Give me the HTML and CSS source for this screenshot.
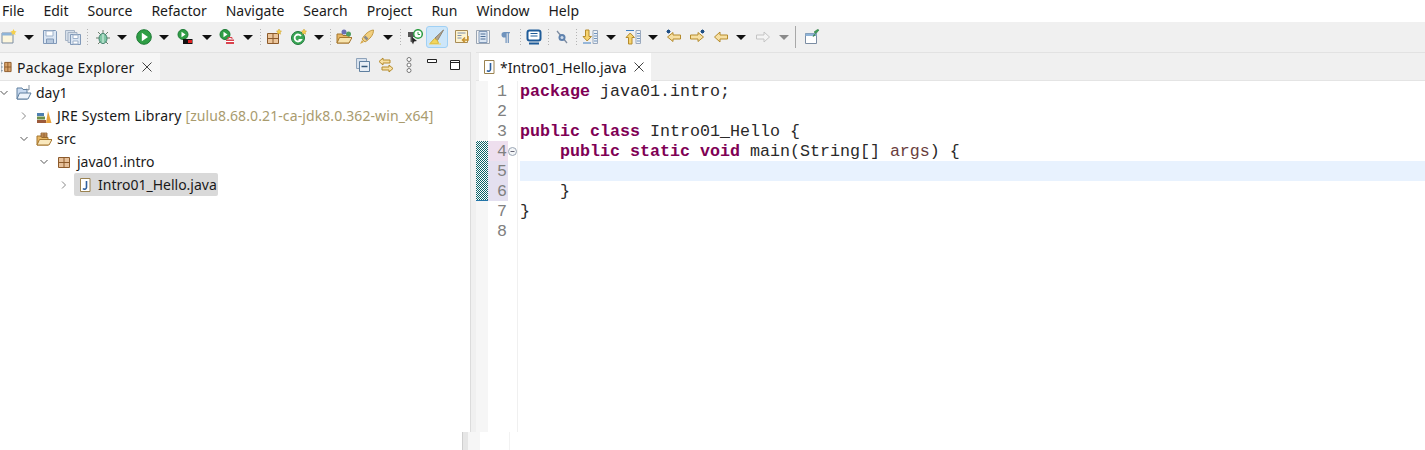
FILE: index.html
```html
<!DOCTYPE html>
<html lang="en">
<head>
<meta charset="utf-8">
<title>Eclipse</title>
<link rel="stylesheet" href="styles.css">
</head>
<body>
<nav class="menu">
<span>File</span><span>Edit</span><span>Source</span><span>Refactor</span><span>Navigate</span><span>Search</span><span>Project</span><span>Run</span><span>Window</span><span>Help</span>
</nav>
<div class="toolbar">
<svg class="ic g1" viewBox="0 0 16 16"><path d="M1 4h11v10H1z" fill="#fdf6dc" stroke="#7b8da3"/><path d="M1 4h11v2.500H1z" fill="#8fb4d8"/><path d="M12.500 0l1 2 2 .5-1.500 1.500.5 2-2-1-2 1 .5-2L9.500 2.500l2-.5z" fill="#f5d04c"/></svg>
<i class="dr g8"></i>
<svg class="ic g9" viewBox="0 0 16 16"><path d="M1.500 1.500h12l1 1v12h-13z" fill="#dbe6f3" stroke="#8199b8"/><path d="M4 2h7v5H4z" fill="#fff" stroke="#9fb2ca"/><path d="M4.500 10h7v4.500h-7z" fill="#b7c8dd" stroke="#8199b8"/></svg>
<svg class="ic g7" viewBox="0 0 16 16"><path d="M.5 1.500h9v10h-9z" fill="#d6dfea" stroke="#a5b3c5"/><path d="M3 3.500h9v10H3z" fill="#d6dfea" stroke="#a5b3c5"/><path d="M5.500 5.500h10v10h-10z" fill="#dbe6f3" stroke="#8199b8"/><path d="M8 6h5v3.500H8zM8 12h5v3H8z" fill="#fff" stroke="#9fb2ca"/></svg>
<i class="sp g6"></i>
<svg class="ic g7" viewBox="0 0 16 16"><path d="M8 1v3M3 3l3 3M13 3l-3 3M1 9h3M12 9h3M3 15l3-3M13 15l-3-3" stroke="#6b7f6b" fill="none"/><ellipse cx="8" cy="9.500" rx="4" ry="5" fill="#7fc6a4" stroke="#3f7f6b"/><path d="M8 5v9" stroke="#dff2e8"/></svg>
<i class="dr g7"></i>
<svg class="ic g10" viewBox="0 0 16 16"><circle cx="8" cy="8" r="7.300" fill="#2f9e45" stroke="#1d7a35"/><path d="M5.800 3.800l6.200 4.200-6.200 4.200z" fill="#fff"/></svg>
<i class="dr g8"></i>
<svg class="ic g9" viewBox="0 0 16 16"><circle cx="6" cy="5.500" r="5" fill="#2f9e45" stroke="#1d7a35"/><path d="M4.500 2.800l4 2.700-4 2.700z" fill="#fff"/><path d="M6 10h9.500v5H6z" fill="#111"/><path d="M11 11h4v3h-4z" fill="#d22"/></svg>
<i class="dr g10"></i>
<svg class="ic g8" viewBox="0 0 16 16"><circle cx="6" cy="5.500" r="5" fill="#2f9e45" stroke="#1d7a35"/><path d="M4.500 2.800l4 2.700-4 2.700z" fill="#fff"/><path d="M7 10.500h8v4.500H7z" fill="#d9434e"/><path d="M9 10V8.500h4V10" fill="none" stroke="#d9434e"/><path d="M7 12.500h8" stroke="#fff"/></svg>
<i class="dr g9"></i>
<i class="sp g8"></i>
<svg class="ic g5" viewBox="0 0 16 16"><path d="M1.500 4.500h11v10h-11z" fill="#ebc59b" stroke="#8c5a2b"/><path d="M7 4.500v10M1.500 9.500h11" stroke="#8c5a2b"/><path d="M13 0l.8 1.700 1.700.5-1.300 1.200.3 1.800-1.500-.9-1.500.9.300-1.800-1.300-1.200 1.700-.5z" fill="#f5d04c" stroke="#c69a26" stroke-width=".5"/></svg>
<svg class="ic g9" viewBox="0 0 16 16"><circle cx="7" cy="9" r="6.500" fill="#3aa655" stroke="#1f7a3a"/><path d="M10 7a3.500 3.500 0 1 0 0 4H7.500" fill="none" stroke="#fff" stroke-width="1.800"/><path d="M13 0l.8 1.700 1.700.5-1.300 1.200.3 1.800-1.500-.9-1.500.9.300-1.800-1.300-1.200 1.700-.5z" fill="#f5d04c" stroke="#c69a26" stroke-width=".5"/></svg>
<i class="dr g8"></i>
<i class="sp g7"></i>
<svg class="ic g5" viewBox="0 0 16 16"><path d="M1 5h5l1 1.500h6V14H1z" fill="#e8b765" stroke="#a5762e"/><path d="M1 14l2.500-5.500H16L13 14z" fill="#f7e3ad" stroke="#a5762e"/><circle cx="8" cy="3" r="2.500" fill="#6a6fb5"/><circle cx="12.500" cy="5" r="2.500" fill="#4f9e63"/></svg>
<svg class="ic g7" viewBox="0 0 16 16"><path d="M14.500 1C10 1.500 6 5 3 10l3 3c5-3 8.500-7 8.500-12z" fill="#f2cf7e" stroke="#c39a44"/><path d="M5.500 7.500l3 3" stroke="#8a8a8a" stroke-width="2.500"/><path d="M3 11l-2 4 4-2z" fill="#d8a94a"/></svg>
<i class="dr g9"></i>
<i class="sp g8"></i>
<svg class="ic g6" viewBox="0 0 16 16"><path d="M1 3h8v5H6v7l-1.500-2-1-.2V8H1z" fill="#555"/><path d="M5 8l5 4-3 .5-1 3z" fill="#222"/><circle cx="11" cy="5" r="4.300" fill="#fff" stroke="#2f9e45" stroke-width="1.500"/><path d="M11 3v2.500h2" stroke="#2f9e45" fill="none"/></svg>
<span class="active g2"><svg class="ic" viewBox="0 0 16 16"><path d="M14.500 1L6 9l2.500 2.500z" fill="#b4a58a" stroke="#8e8270"/><path d="M5.500 9.500L1 14.500h8.500l-1-3z" fill="#f2d65d" stroke="#d4b23a"/><path d="M0 15h12" stroke="#f2d65d"/></svg></span>
<svg class="ic g9" viewBox="0 0 16 16"><path d="M1.500 1.500h12v12h-12z" fill="#fdf3cf" stroke="#a88c55"/><path d="M3.500 4h8M3.500 6.500h4M3.500 9h4" stroke="#7e90ad"/><path d="M14 7v4H9M11 8.500L8.500 11l2.500 2.500" fill="none" stroke="#c6912e" stroke-width="1.500"/></svg>
<svg class="ic g5" viewBox="0 0 16 16"><path d="M1.500 1.500h13v13h-13z" fill="#f4f4f4" stroke="#9aa5b3"/><path d="M4 2.500h8v11H4z" fill="#dbe6f3" stroke="#8199b8"/><path d="M5.500 5h5M5.500 7.500h5M5.500 10h5" stroke="#4f6f96"/></svg>
<svg class="ic g7" viewBox="0 0 16 16"><path d="M11.500 3H7.800a2.800 2.800 0 0 0 0 5.600H9V14h1.200V4.200h1V14h1.200V4.200h1V3z" fill="#6f93bd" transform="translate(-1.500 0)"/></svg>
<i class="sp g6"></i>
<svg class="ic g5" viewBox="0 0 16 16"><rect x="1.500" y="1.500" width="13" height="10" rx="2" fill="#fff" stroke="#1f5c99" stroke-width="2"/><path d="M4.500 4.500h7M4.500 7h7" stroke="#1f5c99"/><path d="M3 14.500h10" stroke="#1f5c99" stroke-width="2"/></svg>
<i class="sp g6"></i>
<svg class="ic g5" viewBox="0 0 16 16"><path d="M3 2l10 12" stroke="#7e8ca0" stroke-width="1.300"/><circle cx="8" cy="8.500" r="3.500" fill="#5f82ad"/><circle cx="8" cy="8.500" r="1.500" fill="#cfdcec"/></svg>
<i class="sp g6"></i>
<svg class="ic g5" viewBox="0 0 16 16"><path d="M11 1.500h4.500v13H11z" fill="#eef2f7" stroke="#9aa9bd"/><path d="M12 4.500h3M12 7h3M12 9.500h3M12 12h3" stroke="#6f93bd"/><path d="M3.500 1h3.500v6.500h2.500L5.200 12 1 7.500h2.500z" fill="#f6d36f" stroke="#b58b2c"/><path d="M1 14h8" stroke="#3f7fc2"/></svg>
<i class="dr g9"></i>
<svg class="ic g10" viewBox="0 0 16 16"><path d="M11 1.500h4.500v13H11z" fill="#eef2f7" stroke="#9aa9bd"/><path d="M12 4.500h3M12 7h3M12 9.500h3M12 12h3" stroke="#6f93bd"/><path d="M3.500 15V8.500H1L5.200 4l4.300 4.500H7V15z" fill="#f6d36f" stroke="#b58b2c"/><path d="M1 1.500h8" stroke="#3f7fc2"/></svg>
<i class="dr g8"></i>
<svg class="ic g9" viewBox="0 0 16 16"><path d="M1.500 8L7 3.500v2.500h7.500v4H7v2.500z" fill="#f7e0a3" stroke="#b58b2c"/><path d="M1 1l3 3M4 1L1 4M.5 2.500h4M2.500.5v4" stroke="#1f4f85"/></svg>
<svg class="ic g7" viewBox="0 0 16 16"><path d="M14.500 8L9 3.500v2.500H1.500v4H9v2.500z" fill="#f7e0a3" stroke="#b58b2c"/><path d="M12 1l3 3M15 1l-3 3M11.500 2.500h4M13.500.5v4" stroke="#1f4f85"/></svg>
<svg class="ic g8" viewBox="0 0 16 16"><path d="M1.500 8L7 3v3h7.500v4H7v3z" fill="#f7e0a3" stroke="#b58b2c"/></svg>
<i class="dr g8"></i>
<svg class="ic g10" viewBox="0 0 16 16"><path d="M14.500 8L9 3v3H1.500v4H9v3z" fill="#f4f4f4" stroke="#c4c4c4"/></svg>
<i class="dr off g9"></i>
<i class="sp tall g7"></i>
<svg class="ic g8" viewBox="0 0 16 16"><path d="M1.500 4.500h11v10h-11z" fill="#fff" stroke="#7b8da3"/><path d="M1.500 4.500h11v2.500h-11z" fill="#8fb4d8"/><path d="M15 1l-3 3.500-2-1.500 3.500-2.500zM10.500 5l-1.500 2.500 2.500-1.500" fill="#3f9e58" stroke="#2c7a41" stroke-width=".6"/></svg>
</div>
<main class="work">
<section class="left">
<header class="viewbar">
<div class="viewtab">
<svg class="tabic" viewBox="0 0 12 14"><path d="M0 1v12M0 3h2M0 7h2M0 11h2" stroke="#7f8f9f" fill="none"/><path d="M4 2h7v10H4z" fill="#d9a46c" stroke="#8c5a2b"/><path d="M7.500 2v10M4 7h7" stroke="#8c5a2b"/></svg>
<span class="wide">Package Explorer</span>
<svg class="close" viewBox="0 0 10 10"><path d="M.5.5l9 9M9.500.5l-9 9" stroke="#444" fill="none"/></svg>
</div>
<div class="viewtools">
<svg class="vt" viewBox="0 0 16 16"><path d="M1.500 1.500h10v10h-10z" fill="#d8e2ee" stroke="#8fa3ba"/><path d="M4.500 4.500h10v10h-10z" fill="#e8eef5" stroke="#5f7f9f"/><path d="M6.500 9.500h6" stroke="#36587a" stroke-width="1.500"/></svg>
<svg class="vt link" viewBox="0 0 16 16"><path d="M1 4.500L5 1v2h7v3H5v2z" fill="#f7e0a3" stroke="#b58b2c"/><path d="M15 11.500L11 8v2H4v3h7v2z" fill="#f7e0a3" stroke="#b58b2c"/></svg>
<svg class="vt dots" viewBox="0 0 6 16"><circle cx="3" cy="2.500" r="2" fill="#fff" stroke="#777"/><circle cx="3" cy="8" r="2" fill="#fff" stroke="#777"/><circle cx="3" cy="13.500" r="2" fill="#fff" stroke="#777"/></svg>
<svg class="vt min" viewBox="0 0 10 5"><path d="M.5.5h9v3h-9z" fill="#fff" stroke="#222"/></svg>
<svg class="vt max" viewBox="0 0 10 10"><path d="M.5.500h9v9h-9z" fill="#fff" stroke="#222"/><path d="M.5 2.500h9" stroke="#222"/></svg>
</div>
</header>
<ul class="tree">
<li class="row lv0"><svg class="chev" viewBox="0 0 8 8"><path d="M.5 2l3.500 3.500L7.500 2" fill="none" stroke="#555"/></svg><svg class="ti" viewBox="0 0 16 16"><path d="M1 3h5l1 1.500h4V14H1z" fill="#c8daf0" stroke="#5f7f9f"/><path d="M1 14l2.500-6H15l-3 6z" fill="#eef4fb" stroke="#5f7f9f"/><path d="M13 0v5l-2.500-1" fill="none" stroke="#7f8f9f"/></svg><span>day1</span></li>
<li class="row lv1"><svg class="chev" viewBox="0 0 8 8"><path d="M2 .5l3.500 3.500L2 7.500" fill="none" stroke="#888"/></svg><svg class="ti" viewBox="0 0 16 16"><path d="M1 5h7v3H1z" fill="#4d7fb0"/><path d="M1 8.500h8v3H1z" fill="#6d8f4a"/><path d="M1 12h9v3H1z" fill="#9c5a3a"/><path d="M10 15L12 3l3.500 12z" fill="#e8a33d"/></svg><span class="wide2">JRE System Library <b class="deco">[zulu8.68.0.21-ca-jdk8.0.362-win_x64]</b></span></li>
<li class="row lv1"><svg class="chev" viewBox="0 0 8 8"><path d="M.5 2l3.500 3.500L7.500 2" fill="none" stroke="#555"/></svg><svg class="ti" viewBox="0 0 16 16"><path d="M1 5h4l1 1.500h6V14H1z" fill="#e8b765" stroke="#a5762e"/><path d="M1 14l2.500-5.500H16L13 14z" fill="#f9e8bd" stroke="#a5762e"/><path d="M5 2h6v4H5zM8 2v4M5 4h6" fill="#d9a46c" stroke="#8c5a2b" stroke-width=".8"/></svg><span>src</span></li>
<li class="row lv2"><svg class="chev" viewBox="0 0 8 8"><path d="M.5 2l3.500 3.500L7.500 2" fill="none" stroke="#555"/></svg><svg class="ti" viewBox="0 0 16 16"><path d="M2.500 3.500h11v10h-11z" fill="#e6c09a" stroke="#8c5a2b"/><path d="M8 3.500v10M2.500 8.500h11" stroke="#8c5a2b"/></svg><span>java01.intro</span></li>
<li class="row lv3"><svg class="chev" viewBox="0 0 8 8"><path d="M2 .5l3.500 3.500L2 7.500" fill="none" stroke="#888"/></svg><span class="sel"><svg class="ti" viewBox="0 0 16 16"><path d="M3.500 1.500h9.500v13H3.500z" fill="#fff" stroke="#9a8250"/><path d="M9.500 4v6.500a2 2 0 0 1-3.500 1" fill="none" stroke="#2d5f9e" stroke-width="1.600"/></svg><span>Intro01_Hello.java</span></span></li>
</ul>
</section>
<div class="sash"></div>
<section class="editor">
<header class="edbar">
<div class="edtab">
<svg class="ti" viewBox="0 0 16 16"><path d="M3.500 1.500h9.500v13H3.500z" fill="#fff" stroke="#9a8250"/><path d="M9.500 4v6.500a2 2 0 0 1-3.500 1" fill="none" stroke="#2d5f9e" stroke-width="1.600"/></svg>
<span>*Intro01_Hello.java</span>
<svg class="close" viewBox="0 0 10 10"><path d="M.5.5l9 9M9.500.5l-9 9" stroke="#444" fill="none"/></svg>
</div>
</header>
<div class="code">
<div class="ln"><i class="mark"></i><i class="num">1</i><i class="fold"></i><pre><b>package</b> java01.intro;</pre></div>
<div class="ln"><i class="mark"></i><i class="num">2</i><i class="fold"></i><pre></pre></div>
<div class="ln"><i class="mark"></i><i class="num">3</i><i class="fold"></i><pre><b>public</b> <b>class</b> Intro01_Hello {</pre></div>
<div class="ln"><i class="mark on"></i><i class="num pink">4</i><i class="fold"><svg viewBox="0 0 9 9"><circle cx="4.500" cy="4.500" r="4" fill="#f4f6f8" stroke="#9aa5b3"/><path d="M2.500 4.500h4" stroke="#667"/></svg></i><pre>    <b>public</b> <b>static</b> <b>void</b> main(String[] <u>args</u>) {</pre></div>
<div class="ln cur"><i class="mark on"></i><i class="num lav">5</i><i class="fold"></i><pre></pre></div>
<div class="ln"><i class="mark on end"></i><i class="num lav">6</i><i class="fold"></i><pre>    }</pre></div>
<div class="ln"><i class="mark"></i><i class="num">7</i><i class="fold"></i><pre>}</pre></div>
<div class="ln"><i class="mark"></i><i class="num">8</i><i class="fold"></i><pre></pre></div>
<div class="fill"><i class="mark"></i><i class="num"></i><i class="fold"></i></div>
</div>
</section>
</main>
<footer class="foot"><i class="fsash"></i><i class="fmark"></i><i class="fnum"></i></footer>
</body>
</html>
```
FILE: styles.css
```css
* { box-sizing: border-box; }
html, body { margin: 0; height: 450px; overflow: hidden; }
body { background: #fff; font-family: "Noto Sans", "Open Sans", sans-serif; font-size: 14px; color: #1a1a1a; display: flex; flex-direction: column; }
i { font-style: normal; }
.menu { height: 22px; flex: none; display: flex; align-items: center; padding-left: 2px; background: #fff; }
.menu span { margin-right: 19px; line-height: 22px; }
.toolbar { height: 30px; flex: none; display: flex; align-items: center; background: #f0f0f0; padding-bottom: 1px; }
.ic { width: 16px; height: 16px; flex: none; display: block; }
.dr { width: 10px; height: 0; flex: none; border-left: 5px solid transparent; border-right: 5px solid transparent; border-top: 5px solid #111; margin-top: 1px; margin-right: -2px; transform: translateX(-1px); }
.dr.off { border-top-color: #8a8a8a; }
.sp { width: 1px; height: 16px; flex: none; background-image: repeating-linear-gradient(#b4b4b4 0 1px, transparent 1px 3px); }
.sp.tall { height: 22px; background: #a8a8a8; }
.active { display: flex; align-items: center; justify-content: center; width: 22px; height: 22px; flex: none; background: #cde6f9; border: 1px solid #9fd0f5; border-radius: 3px; margin-right: -3px; }
.g1 { margin-left: 1px; } .g2 { margin-left: 3px; } .g5 { margin-left: 5px; } .g6 { margin-left: 6px; } .g7 { margin-left: 7px; } .g8 { margin-left: 8px; } .g9 { margin-left: 9px; } .g10 { margin-left: 10px; }
.work { height: 380px; flex: none; display: flex; }
.left { width: 470px; flex: none; display: flex; flex-direction: column; }
.viewbar { height: 28px; flex: none; display: flex; justify-content: space-between; background: #eeeeee; border-top: 1px solid #e2e2e2; }
.viewtab { width: 160px; display: flex; align-items: center; background: #f6f6f6; padding: 1px 0 0 1px; }
.wide { letter-spacing: .25px; }
.wide2 { letter-spacing: .2px; }
.tabic { width: 11px; height: 14px; margin-right: 5px; flex: none; }
.close { width: 10px; height: 10px; margin-left: 7px; flex: none; }
.viewtools { display: flex; align-items: center; padding-right: 10px; padding-bottom: 4px; }
.vt { width: 16px; height: 16px; flex: none; }
.link { margin-left: 7px; }
.dots { width: 6px; margin-left: 12px; }
.min { width: 10px; height: 5px; margin-left: 15px; margin-bottom: 6px; }
.max { width: 10px; height: 10px; margin-left: 13px; }
.tree { list-style: none; margin: 0; padding: 0; flex: 1; border-top: 1px solid #e4e4e4; }
.row { height: 23px; display: flex; align-items: center; white-space: nowrap; }
.chev { width: 8px; height: 8px; flex: none; margin-right: 9px; }
.ti { width: 16px; height: 16px; flex: none; margin-right: 5px; }
.deco { font-weight: 400; color: #a99b6e; letter-spacing: .1px; }
.lv0 .chev { margin-right: 8px; }
.lv0 .ti { margin-right: 4px; }
.lv1 { padding-left: 20px; }
.lv1 .chev { margin-right: 8px; }
.lv2 { padding-left: 40px; }
.lv2 .chev { margin-right: 8px; }
.lv3 { padding-left: 60px; }
.lv3 .chev { margin-right: 6px; }
.sel { display: flex; align-items: center; height: 23px; background: #d9d9d9; border-radius: 2px; padding: 0 1px 0 3px; }
.sash { width: 6px; flex: none; background: #f0f0f0; border-left: 1px solid #dcdcdc; }
.editor { flex: 1; min-width: 0; display: flex; flex-direction: column; }
.edbar { height: 29px; flex: none; background: #f0f0f0; border-top: 1px solid #e2e2e2; border-bottom: 1px solid #e4e4e4; padding-left: 3px; }
.edtab { width: 172px; height: 28px; display: flex; align-items: center; background: #fff; padding-left: 2px; }
.edtab .ti { margin-right: 3px; }
.code { flex: 1; display: flex; flex-direction: column; font-family: "Liberation Mono", monospace; font-size: 16.67px; }
.ln { height: 20px; flex: none; display: flex; }
.fill { flex: 1; display: flex; }
.mark { width: 12px; flex: none; background: #f6f6f6; }
.mark.on { background: repeating-conic-gradient(#0b6468 0 25%, #ffffff 0 50%) 0 0 / 2px 2px; }
.mark.end { border-bottom: 1px solid #2375a8; }
.num { width: 20px; flex: none; text-align: right; padding-right: 1px; color: #808080; line-height: 22px; }
.pink { background: #eedfee; }
.lav { background: #e4e0f0; }
.fold { width: 10px; flex: none; border-right: 1px solid #f0f0f0; margin-right: 2px; display: flex; align-items: center; }
.fold svg { width: 9px; height: 9px; }
.ln pre { margin: 0; flex: 1; font: inherit; line-height: 22px; height: 20px; white-space: pre; color: #2a2a2a; }
.ln pre b { color: #7f0055; }
.ln pre u { color: #6a3e3e; text-decoration: none; }
.cur pre { background: #e8f2fe; }
.foot { flex: 1; display: flex; padding-left: 462px; }
.fsash { width: 6px; background: #e6e6e6; border-left: 1px solid #cfcfcf; }
.fmark { width: 12px; background: #f6f6f6; }
.fnum { width: 30px; border-right: 1px solid #f2f2f2; }
```
